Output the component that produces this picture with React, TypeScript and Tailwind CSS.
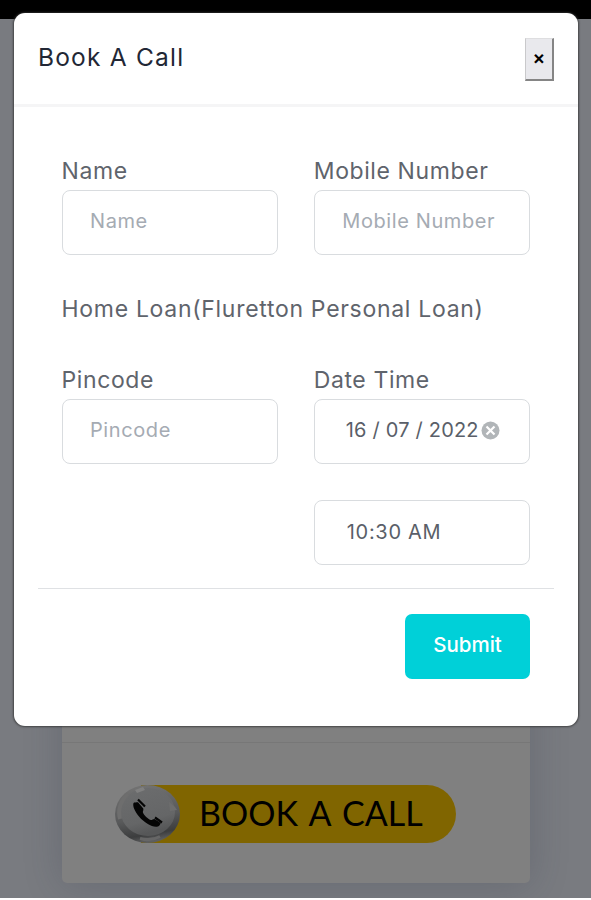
import React from 'react';

interface FieldProps {
  label: string;
  children: React.ReactNode;
}

function Field({ label, children }: FieldProps) {
  return (
    <div className="w-[217px]">
      <label className="block h-[35px] pt-px text-[23px] leading-[30px] tracking-[0.6px] whitespace-nowrap text-[#5f646c]">
        {label}
      </label>
      {children}
    </div>
  );
}

function TextInput({ placeholder }: { placeholder: string }) {
  return (
    <input
      placeholder={placeholder}
      className="block h-[65px] w-full rounded-[8px] border-[1.5px] border-[#d9dcdf] bg-white pb-[3px] pl-[27.5px] text-[20px] tracking-[0.6px] text-[#5a5f69] outline-none placeholder:text-[#a5abb3]"
    />
  );
}

function ClearIcon() {
  return (
    <svg width="19" height="19" viewBox="0 0 19 19">
      <circle cx="9.5" cy="9.5" r="9" fill="#b1b5b8" />
      <path d="M5.5 5.5l8 8M13.5 5.5l-8 8" stroke="#fff" strokeWidth="2.2" />
    </svg>
  );
}

function PhoneBadge() {
  return (
    <svg width="66" height="60" viewBox="0 0 66 60" className="-ml-[26px] shrink-0">
      <defs>
        <linearGradient id="rim" x1="0.2" y1="0" x2="0.4" y2="1">
          <stop offset="0" stopColor="#747474" />
          <stop offset="0.6" stopColor="#58595a" />
          <stop offset="0.88" stopColor="#3c3d3e" />
          <stop offset="1" stopColor="#5c5d5e" />
        </linearGradient>
        <linearGradient id="face" x1="0" y1="0" x2="0.3" y2="1">
          <stop offset="0" stopColor="#6c6d6e" />
          <stop offset="0.75" stopColor="#656667" />
          <stop offset="1" stopColor="#565758" />
        </linearGradient>
      </defs>
      <ellipse cx="32.5" cy="30" rx="32.5" ry="29" fill="url(#rim)" />
      <ellipse cx="33" cy="28" rx="27" ry="24" fill="url(#face)" />
      <path d="M5 35A29 26 0 0 1 13 10" fill="none" stroke="#6e6e6e" strokeWidth="4" />
      <path d="M20 6l8-3 2 3-8 3z" fill="#808080" />
      <path d="M25 54.5q11 3 20-2" fill="none" stroke="#666" strokeWidth="3" />
      <path d="M54 18q6 4 8 8l-7 1z" fill="#6e6e6e" />
      <path
        d="M18.5 19c-1 3 1 8 5.5 13.500 5 6 12 10 17 10.300 2.500.3 4-1.500 4.700-3.800l-6.200-4c-1.800.2-2.500 1.200-3.500 1-2.500-.5-7.500-5-8.200-8 .2-1 .8-1.800.5-3.500l-5.300-6.200c-2 0-3.500.1-4.500.7z"
        fill="#050505"
      />
      <path d="M23 15.500l7 7M40 33.500l7 5" stroke="#050505" strokeWidth="2.2" />
    </svg>
  );
}

function BookCard() {
  return (
    <div className="flex h-[883px] w-[468px] flex-col justify-end rounded-[5px] bg-[#808080] shadow-[0_2px_38px_rgba(45,55,70,0.24)]">
      <div className="flex h-[141px] items-start border-t border-[#777] pt-[42px] pl-[79px]">
        <div className="flex h-[58px] w-[315px] items-center rounded-r-[29px] bg-[#806500]">
          <PhoneBadge />
          <span className="ml-[18.5px] pb-[2px] font-[Lato,sans-serif] text-[34px] leading-[56px] [word-spacing:3px] whitespace-nowrap text-black">
            BOOK A CALL
          </span>
        </div>
      </div>
    </div>
  );
}

function CallDialog() {
  return (
    <div className="absolute top-[13px] left-[13.5px] h-[713px] w-[564.5px] rounded-[11px] bg-white shadow-[0_0_2px_1px_rgba(50,50,50,0.75)]">
      <div className="flex h-[94px] items-start justify-between border-b-[3px] border-[#f5f5f6] pr-[24px] pl-[24.5px]">
        <h5 className="pt-[28px] text-[24.5px] leading-[32px] tracking-[1.2px] text-[#222735]">Book A Call</h5>
        <button className="mt-[25px] h-[43px] w-[29px] border-t border-r-2 border-b-2 border-l border-t-[#dedee0] border-r-[#858585] border-b-[#858585] border-l-[#c9c9cb] bg-[#e9e9ed] pb-[4px] text-[19px] font-semibold leading-none text-black">
          ×
        </button>
      </div>

      <div className="px-[24px] pt-[36px]">
        <div className="px-[24px]">
          <div className="flex h-[137px] gap-[36px] pt-[12px]">
            <Field label="Name">
              <TextInput placeholder="Name" />
            </Field>
            <Field label="Mobile Number">
              <TextInput placeholder="Mobile Number" />
            </Field>
          </div>

          <p className="h-[84px] pt-[14px] text-[23px] leading-[30px] tracking-[0.7px] whitespace-nowrap text-[#5f646c]">
            Home Loan(Fluretton Personal Loan)
          </p>

          <div className="flex h-[211px] gap-[36px]">
            <Field label="Pincode">
              <TextInput placeholder="Pincode" />
            </Field>
            <Field label="Date Time">
              <div className="flex h-[65px] items-center rounded-[8px] border-[1.5px] border-[#d9dcdf] pb-[3px] pl-[31px] text-[20px] tracking-[0.2px] text-[#5a5f69]">
                <span className="w-[135px] whitespace-nowrap">16 / 07 / 2022</span>
                <ClearIcon />
              </div>
              <div className="mt-[36px] flex h-[65px] items-center rounded-[8px] border-[1.5px] border-[#d9dcdf] pb-[2px] pl-[32px] text-[20px] tracking-[0.7px] text-[#5a5f69]">
                10:30 AM
              </div>
            </Field>
          </div>
        </div>

        <div className="mt-[13px] flex justify-end border-t border-[#dfe1e4] pt-[25px] pr-[24px]">
          <button className="h-[65px] w-[125px] rounded-[7px] bg-[#00d0d8] pb-[3px] text-[20.5px] font-medium text-white">
            Submit
          </button>
        </div>
      </div>
    </div>
  );
}

function App() {
  return (
    <div className="relative h-[900px] w-[591px] overflow-hidden bg-white font-[Inter,sans-serif]">
      <div className="flex h-[898px] justify-center overflow-hidden border-t-[19px] border-black bg-[#797b80]">
        <div className="-mt-[19px]">
          <BookCard />
        </div>
      </div>
      <CallDialog />
    </div>
  );
}

export default App;
